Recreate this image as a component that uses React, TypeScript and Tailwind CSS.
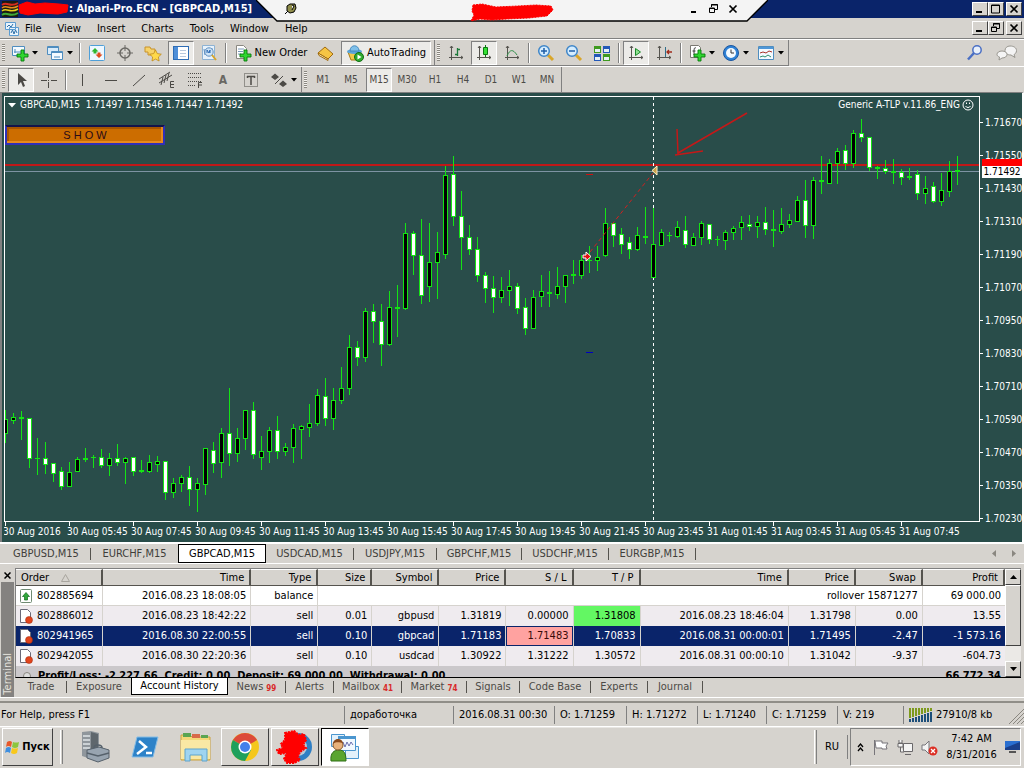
import type { ReactNode } from "react";
import clsx from "clsx";

// --- Data ---------------------------------------------------------------------

type CandleKind = "up" | "down" | "doji";
type Candle = [high: number, top: number, bottom: number, low: number, kind: CandleKind];

const CANDLES: Candle[] = [
  [410, 419, 433, 442, "up"], [413, 417, 420, 423, "up"], [411, 417, 418, 439, "doji"],
  [418, 418, 458, 467, "down"], [438, 458, 458, 474, "doji"], [442, 458, 464, 473, "down"],
  [463, 463, 473, 481, "down"], [467, 471, 486, 489, "down"], [462, 472, 486, 486, "up"],
  [457, 459, 471, 471, "up"], [448, 458, 459, 461, "doji"], [455, 457, 457, 467, "doji"],
  [449, 457, 465, 467, "down"], [453, 458, 465, 475, "up"], [444, 458, 462, 465, "down"],
  [457, 458, 462, 483, "up"], [457, 457, 471, 475, "down"], [460, 470, 471, 472, "doji"],
  [455, 462, 471, 472, "up"], [456, 461, 464, 471, "up"], [461, 461, 492, 499, "down"],
  [478, 483, 492, 497, "up"], [475, 477, 483, 491, "up"], [466, 477, 489, 505, "down"],
  [478, 483, 489, 511, "up"], [448, 448, 484, 494, "up"], [442, 450, 463, 472, "down"],
  [428, 433, 462, 477, "up"], [388, 433, 453, 465, "down"], [428, 438, 453, 461, "up"],
  [410, 410, 438, 449, "up"], [402, 410, 454, 458, "down"], [436, 451, 457, 469, "up"],
  [427, 430, 451, 462, "up"], [416, 430, 451, 458, "down"], [443, 447, 451, 455, "up"],
  [424, 428, 447, 462, "up"], [425, 426, 429, 458, "up"], [404, 423, 427, 436, "up"],
  [389, 395, 423, 425, "up"], [378, 396, 418, 425, "down"], [388, 400, 418, 429, "up"],
  [367, 388, 400, 403, "up"], [335, 347, 388, 394, "up"], [341, 347, 357, 365, "down"],
  [308, 311, 357, 361, "up"], [304, 311, 321, 342, "down"], [304, 321, 344, 365, "down"],
  [291, 307, 344, 345, "up"], [285, 307, 308, 336, "doji"], [223, 233, 308, 309, "up"],
  [231, 233, 255, 274, "down"], [219, 255, 295, 303, "down"], [223, 262, 286, 301, "up"],
  [232, 252, 262, 298, "up"], [166, 175, 254, 258, "up"], [156, 174, 216, 225, "down"],
  [191, 216, 237, 269, "down"], [225, 237, 249, 254, "down"], [237, 249, 275, 281, "down"],
  [272, 275, 288, 302, "down"], [276, 288, 297, 312, "down"], [277, 290, 297, 302, "up"],
  [270, 286, 290, 305, "up"], [283, 286, 308, 313, "down"], [298, 307, 328, 334, "down"],
  [290, 297, 328, 328, "up"], [275, 291, 296, 306, "up"], [271, 292, 293, 306, "doji"],
  [267, 286, 294, 298, "up"], [275, 275, 286, 302, "up"], [260, 274, 275, 283, "doji"],
  [255, 260, 275, 278, "up"], [246, 260, 260, 272, "doji"], [246, 257, 260, 270, "up"],
  [208, 223, 255, 256, "up"], [223, 223, 235, 246, "down"], [228, 234, 244, 253, "down"],
  [237, 242, 249, 258, "down"], [227, 235, 249, 250, "up"], [207, 236, 237, 243, "doji"],
  [208, 244, 277, 277, "up"], [229, 232, 245, 245, "up"], [232, 235, 235, 241, "doji"],
  [221, 227, 236, 237, "up"], [216, 230, 244, 247, "down"], [233, 237, 245, 245, "up"],
  [221, 223, 237, 244, "up"], [224, 224, 239, 243, "down"], [236, 239, 239, 245, "doji"],
  [230, 232, 240, 249, "up"], [226, 228, 232, 239, "up"], [216, 222, 227, 239, "up"],
  [215, 224, 226, 230, "down"], [216, 222, 226, 237, "up"], [207, 222, 229, 234, "down"],
  [210, 229, 230, 246, "doji"], [208, 224, 231, 233, "up"], [214, 220, 224, 227, "up"],
  [196, 200, 221, 221, "up"], [180, 200, 225, 237, "down"], [177, 180, 225, 238, "up"],
  [156, 180, 181, 193, "doji"], [159, 163, 183, 183, "up"], [148, 151, 163, 183, "up"],
  [145, 150, 163, 169, "down"], [130, 133, 163, 167, "up"], [119, 133, 137, 141, "down"],
  [137, 137, 167, 170, "down"], [166, 167, 168, 178, "doji"], [160, 168, 171, 173, "down"],
  [159, 171, 172, 183, "doji"], [169, 172, 177, 184, "down"], [168, 176, 177, 179, "doji"],
  [170, 174, 193, 199, "down"], [176, 188, 193, 203, "up"], [182, 186, 201, 202, "down"],
  [173, 190, 201, 205, "up"], [161, 171, 191, 196, "up"], [156, 170, 171, 184, "doji"],
];

const PRICES = [
  "1.71670", "1.71550", "1.71430", "1.71310", "1.71190", "1.71070", "1.70950",
  "1.70830", "1.70710", "1.70590", "1.70470", "1.70350", "1.70230",
];

const TIMES = [
  "30 Aug 2016", "30 Aug 05:45", "30 Aug 07:45", "30 Aug 09:45", "30 Aug 11:45",
  "30 Aug 13:45", "30 Aug 15:45", "30 Aug 17:45", "30 Aug 19:45", "30 Aug 21:45",
  "30 Aug 23:45", "31 Aug 01:45", "31 Aug 03:45", "31 Aug 05:45", "31 Aug 07:45",
];

const CHART_TABS = [
  { label: "GBPUSD,M15", width: "w-[89px]" },
  { label: "EURCHF,M15", width: "w-[87px]" },
  { label: "GBPCAD,M15", width: "w-[88px]", active: true },
  { label: "USDCAD,M15", width: "w-[88px]" },
  { label: "USDJPY,M15", width: "w-[83px]" },
  { label: "GBPCHF,M15", width: "w-[85px]" },
  { label: "USDCHF,M15", width: "w-[87px]" },
  { label: "EURGBP,M15", width: "w-[87px]" },
];

const TERMINAL_TABS = [
  { label: "Trade", width: "w-[51px]" },
  { label: "Exposure", width: "w-[64px]" },
  { label: "Account History", width: "w-[97px]", active: true },
  { label: "News", width: "w-[58px]", badge: "99" },
  { label: "Alerts", width: "w-[48px]" },
  { label: "Mailbox", width: "w-[68px]", badge: "41" },
  { label: "Market", width: "w-[65px]", badge: "74" },
  { label: "Signals", width: "w-[53px]" },
  { label: "Code Base", width: "w-[71px]" },
  { label: "Experts", width: "w-[57px]" },
  { label: "Journal", width: "w-[55px]" },
];

const COLUMNS = [
  { label: "Order", width: "w-[87px]" },
  { label: "Time", width: "w-[148px]" },
  { label: "Type", width: "w-[67px]" },
  { label: "Size", width: "w-[54px]" },
  { label: "Symbol", width: "w-[67px]" },
  { label: "Price", width: "w-[67px]" },
  { label: "S / L", width: "w-[67px]" },
  { label: "T / P", width: "w-[67px]" },
  { label: "Time", width: "w-[148px]" },
  { label: "Price", width: "w-[67px]" },
  { label: "Swap", width: "w-[67px]" },
  { label: "Profit", width: "w-[82px]" },
];

const ORDERS = [
  ["802886012", "2016.08.23 18:42:22", "sell", "0.01", "gbpusd", "1.31819", "0.00000", "1.31808", "2016.08.23 18:46:04", "1.31798", "0.00", "13.55"],
  ["802941965", "2016.08.30 22:00:55", "sell", "0.10", "gbpcad", "1.71183", "1.71483", "1.70833", "2016.08.31 00:00:01", "1.71495", "-2.47", "-1 573.16"],
  ["802942055", "2016.08.30 22:20:36", "sell", "0.10", "usdcad", "1.30922", "1.31222", "1.30572", "2016.08.31 00:00:10", "1.31042", "-9.37", "-604.73"],
];

const SELECTED_ORDER = "802941965";

// --- Shared bits --------------------------------------------------------------

const RAISED = "border border-t-white border-l-white border-r-[#404040] border-b-[#404040]";
const SUNKEN = "border border-t-[#808080] border-l-[#808080] border-r-white border-b-white";

interface IconProps {
  children: ReactNode;
  size?: number;
}

function Icon({ children, size = 18 }: IconProps) {
  return (
    <svg width={size} height={size} viewBox="0 0 18 18" fill="none" className="shrink-0">
      {children}
    </svg>
  );
}

function Caret() {
  return (
    <svg width="6" height="4" viewBox="0 0 6 4" className="shrink-0">
      <path d="M0 0h6L3 3.5z" fill="#000" />
    </svg>
  );
}

function Grip() {
  return (
    <div className="mx-[2px] my-1 w-[3px] shrink-0 self-stretch bg-[repeating-linear-gradient(#8a8780_0_1px,#f4f2ef_1px_2px)]" />
  );
}

function Divider() {
  return <div className="mx-[2px] h-5 w-[2px] shrink-0 border-l border-[#808080] bg-white" />;
}

interface ToolProps {
  label: string;
  children: ReactNode;
  pressed?: boolean;
  width?: string;
}

function Tool({ label, children, pressed = false, width = "w-7" }: ToolProps) {
  return (
    <button type="button" aria-label={label} className={clsx("flex h-6 shrink-0 items-center justify-center px-px", width)}>
      <span
        className={clsx(
          "flex h-full w-full items-center justify-center gap-[3px]",
          pressed && SUNKEN,
          pressed && "bg-[#ecebe8]"
        )}
      >
        {children}
      </span>
    </button>
  );
}

function GreenPlus() {
  return (
    <path d="M10 6h3v4h4v3h-4v4h-3v-4H6v-3h4z" fill="#2fd62f" stroke="#087a0b" strokeWidth="0.9" />
  );
}

function Axes() {
  return <path d="M4.500 2v14M2 13.500h14M3 4l1.500-2L6 4M14 12l2 1.500-2 1.500" stroke="#55534e" />;
}

// --- Title bar and menu -------------------------------------------------------

function WindowButtons({ restore = false }: { restore?: boolean }) {
  const button = clsx(RAISED, "flex h-[14px] w-4 items-center justify-center bg-[#d6d3ce]");
  return (
    <div className="mr-[2px] flex">
      <button type="button" aria-label="Minimize" className={button}>
        <svg width="12" height="10" viewBox="0 0 12 10"><path d="M2 7h6v2H2z" /></svg>
      </button>
      <button type="button" aria-label="Restore" className={button}>
        <svg width="12" height="10" viewBox="0 0 12 10" fill="none" stroke="#000">
          {restore ? <RestoreGlyph /> : <path d="M1.500 1v8h8V1zM1 1.500h9" />}
        </svg>
      </button>
      <button type="button" aria-label="Close" className={clsx(button, "ml-[2px]")}>
        <CloseGlyph />
      </button>
    </div>
  );
}

function RestoreGlyph() {
  return <path d="M3.500 3V.5h6v5H7M3 1h7M1.500 4v4.500h5V4zM1 4.500h6" />;
}

function CloseGlyph() {
  return (
    <svg width="12" height="10" viewBox="0 0 12 10" stroke="#000" strokeWidth="1.700">
      <path d="M2.500 1.500l7 7M9.500 1.500l-7 7" />
    </svg>
  );
}

function RemoteBar() {
  return (
    <div className="absolute top-0 left-1/2 z-10 h-[22px] w-[512px] -translate-x-1/2">
      <svg className="absolute inset-0" width="512" height="22" viewBox="0 0 512 22">
        <path d="M0 0l21 21h470l21-21z" fill="#f4f4f4" />
        <path d="M0 0l21 21h470l21-21" fill="none" stroke="#000" strokeWidth="1.300" />
        <path
          d="M217 5l9-1 14 3 22-1 18-1 15 1 2 4-6 6-18 2-22 1-15 1-12-1-9 2 3-6-2-4z"
          fill="#f00"
          stroke="#f00"
          strokeDasharray="2 1"
        />
        <path d="M31 6l3-2h5l1 4-2 4-4 1-3-2z" fill="#8f8d4a" stroke="#000" />
        <path d="M36 5l2 1-2 4M32 11l-3 3" stroke="#000" fill="#fff" />
      </svg>
      <div className="relative flex h-full items-start justify-end gap-[7px] pt-1 pr-[29px]">
        <button type="button" aria-label="Minimize session">
          <svg width="12" height="10" viewBox="0 0 12 10"><path d="M2 7h5v2H2z" /></svg>
        </button>
        <button type="button" aria-label="Restore session">
          <svg width="12" height="10" viewBox="0 0 12 10" fill="none" stroke="#000"><RestoreGlyph /></svg>
        </button>
        <button type="button" aria-label="Close session"><CloseGlyph /></button>
      </div>
    </div>
  );
}

function TitleBar() {
  return (
    <header className="relative flex h-[18px] items-center justify-between bg-[#0a246a]">
      <div className="flex items-center">
        <svg width="69" height="18" viewBox="0 0 69 18" fill="none">
          <path d="M2 1h16v16H2z" fill="#1b1b12" />
          <path d="M2 5c5-4 8 3 16-2" stroke="#d52b1e" strokeWidth="2" />
          <path d="M2 8c5-4 8 3 16-2" stroke="#e88b1c" strokeWidth="1.500" />
          <path d="M2 11c5-4 8 3 16-2" stroke="#e8d21c" strokeWidth="1.500" />
          <path d="M2 15c5-4 8 3 16-2" stroke="#3faa36" strokeWidth="2" />
          <path d="M19 5l8-3 8 2 10-1 14 1 9 1-1 7-9 2-18-1-12 2-8-2z" fill="#f00" stroke="#f00" />
        </svg>
        <h1 className="text-[11px] leading-4 font-bold whitespace-pre text-white">: Alpari-Pro.ECN - [GBPCAD,M15]</h1>
      </div>
      <WindowButtons />
      <RemoteBar />
    </header>
  );
}

function MenuBar() {
  const items = ["File", "View", "Insert", "Charts", "Tools", "Window", "Help"];
  return (
    <nav className="flex h-[21px] items-center justify-between border-b border-[#808080]">
      <div className="flex items-center gap-[5px] pt-px">
        <svg width="17" height="18" viewBox="0 0 17 18" fill="none" className="ml-[3px]">
          <path d="M2.500 2.500h10v7h-10zM6.500 7.500h9v8h-9z" fill="#e9f4fc" stroke="#5b9bd0" />
          <path d="M4 7l2-2 2 2 2-3M8 13l1.500-3 1.500 4 1.500-4 1.500 3" stroke="#2d6fa8" />
        </svg>
        <div className="flex gap-4">
          {items.map((label) => (
            <button key={label} type="button">{label}</button>
          ))}
        </div>
      </div>
      <WindowButtons restore />
    </nav>
  );
}

// --- Toolbars -----------------------------------------------------------------

function MainToolbar() {
  return (
    <div className="flex h-[27px] items-center justify-between border-t border-white">
      <div className="flex h-full items-center border-r border-b border-[#808080]">
        <Grip />
        <Tool label="New chart" width="w-[35px]">
          <Icon>
            <path d="M1.500 2.500h12v9h-12z" fill="#f4faff" stroke="#4f8dbf" />
            <path d="M4 5v4M3 8h7" stroke="#4f8dbf" />
            <GreenPlus />
          </Icon>
          <Caret />
        </Tool>
        <Tool label="Profiles" width="w-[35px]">
          <Icon>
            <path d="M1.500 2.500h11v8h-11z" fill="#d8ebfa" stroke="#4f8dbf" />
            <path d="M5.500 7.500h11v8h-11z" fill="#f4faff" stroke="#4f8dbf" />
            <path d="M5 8.500h12M2 3.500h10M8 13h6" stroke="#4f8dbf" />
          </Icon>
          <Caret />
        </Tool>
        <Divider />
        <Tool label="Market Watch">
          <Icon>
            <rect x="1.500" y="1.500" width="15" height="15" rx="1" fill="#eef7ff" stroke="#4f9fd8" />
            <path d="M7 4l3.500 3.500H8.500v2h-3v-2H3.500z" fill="#2fb52f" />
            <path d="M11 14l-3.500-3.500h2v-2h3v2h2z" fill="#e04a1c" />
          </Icon>
        </Tool>
        <Tool label="Crosshair view">
          <Icon>
            <circle cx="9" cy="9" r="5" stroke="#6b6964" strokeWidth="1.500" />
            <path d="M9 1v6M9 11v6M1 9h6M11 9h6" stroke="#6b6964" />
          </Icon>
        </Tool>
        <Tool label="Favorites">
          <Icon>
            <path d="M1 3h5l1 2h4v6H4V8H1z" fill="#f7d36a" stroke="#c8922a" />
            <path d="M11.500 6l1.800 3.600 4 .6-2.900 2.800.7 4-3.600-1.900L8 17l.6-4-2.900-2.800 4-.6z" fill="#ffd94a" stroke="#bf8a1c" strokeWidth="0.8" />
          </Icon>
        </Tool>
        <Tool label="Navigator" pressed>
          <Icon>
            <rect x="1.500" y="2.500" width="15" height="13" fill="#fff" stroke="#2f6db5" />
            <path d="M2 3h4v12H2z" fill="#4f8fd8" />
            <path d="M8 6.500h6M8 9.500h6M8 12.500h6" stroke="#b8c9de" />
          </Icon>
        </Tool>
        <Tool label="Data window">
          <Icon>
            <path d="M2.500 1.500h12v14h-12z" fill="#e8f2fb" stroke="#8eb3d4" />
            <path d="M4 5l1 6M12 4v7" stroke="#5f8fc0" />
            <circle cx="9" cy="8" r="4.200" fill="#cfe4f6" stroke="#5f8fc0" />
            <path d="M7 9V6l2 3 1-3v3" stroke="#2f6db5" />
            <path d="M12 11l4 5" stroke="#d9a62a" strokeWidth="2" />
          </Icon>
        </Tool>
        <Divider />
        <Tool label="New Order" width="w-[83px]">
          <Icon>
            <path d="M2.500 1.500h7l3 3v10h-10z" fill="#fff" stroke="#8a8882" />
            <path d="M4 5h6M4 7.500h5M4 10h3" stroke="#7a9ab8" />
            <GreenPlus />
          </Icon>
          <span>New Order</span>
        </Tool>
        <Tool label="MetaEditor">
          <Icon>
            <path d="M1 9l7-6 8 7-5 5z" fill="#f6c544" stroke="#a06a10" />
            <path d="M1 9l10 6v1.500L2 11.500z" fill="#fff1b0" stroke="#a06a10" />
          </Icon>
        </Tool>
        <Tool label="AutoTrading" width="w-[92px]" pressed>
          <Icon>
            <path d="M2 8h13l-3 8H5z" fill="#f2c94a" stroke="#a87b16" />
            <ellipse cx="8.500" cy="7.500" rx="7.500" ry="2.500" fill="#5aa5dc" />
            <path d="M4 7c0-7 9-7 9 0z" fill="#7fc0ea" stroke="#3a7fb5" strokeWidth="0.800" />
            <circle cx="13" cy="13" r="4.500" fill="#2faa2f" stroke="#0f6e12" />
            <path d="M11.500 10.500l4 2.500-4 2.500z" fill="#fff" />
          </Icon>
          <span>AutoTrading</span>
        </Tool>
        <div className="ml-[2px] h-full border-l border-[#808080]" />
        <Grip />
        <Tool label="Bar chart">
          <Icon><Axes /><path d="M10.500 4v8M8 10.500h2M11 5.500h2" stroke="#1d7a3a" strokeWidth="1.300" /></Icon>
        </Tool>
        <Tool label="Candlesticks" pressed>
          <Icon>
            <Axes />
            <path d="M10.500 1v12" stroke="#0b7a10" />
            <path d="M8.500 3.500h4v7h-4z" fill="#35e035" stroke="#0b7a10" />
          </Icon>
        </Tool>
        <Tool label="Line chart">
          <Icon><Axes /><path d="M4 12c3-7 6-7 10-1" stroke="#2f8f4a" /></Icon>
        </Tool>
        <Divider />
        <Tool label="Zoom in">
          <Icon>
            <path d="M11 11l5 5" stroke="#d9a62a" strokeWidth="3" />
            <circle cx="7" cy="7" r="5.300" fill="#d5edff" stroke="#3f86c9" strokeWidth="1.500" />
            <path d="M7 4v6M4 7h6" stroke="#1f5fa8" strokeWidth="1.500" />
          </Icon>
        </Tool>
        <Tool label="Zoom out">
          <Icon>
            <path d="M11 11l5 5" stroke="#d9a62a" strokeWidth="3" />
            <circle cx="7" cy="7" r="5.300" fill="#d5edff" stroke="#3f86c9" strokeWidth="1.500" />
            <path d="M4 7h6" stroke="#1f5fa8" strokeWidth="1.500" />
          </Icon>
        </Tool>
        <Tool label="Tile windows">
          <Icon>
            <path d="M1 2h7v7H1zM10 10h7v7h-7z" fill="#3f9a1f" />
            <path d="M10 2h7v7h-7zM1 10h7v7H1z" fill="#2358b8" />
            <path d="M2 5h5v3H2zM11 5h5v3h-5zM2 13h5v3H2zM11 13h5v3h-5z" fill="#e6f0f6" />
          </Icon>
        </Tool>
        <Divider />
        <Tool label="Auto scroll" pressed>
          <Icon><Axes /><path d="M8.500 4.500l5 3.500-5 3.500z" fill="#8fe08f" stroke="#1a8a2a" /></Icon>
        </Tool>
        <Tool label="Chart shift">
          <Icon>
            <Axes />
            <path d="M10.500 3v10" stroke="#2f6d8a" />
            <path d="M17 8h-5m2-2l-2 2 2 2" stroke="#a02a1a" strokeWidth="1.300" />
          </Icon>
        </Tool>
        <Divider />
        <Tool label="Indicators" width="w-[34px]">
          <Icon>
            <path d="M2.500 1.500h8l2 2v10h-10z" fill="#fff" stroke="#7a7872" />
            <path d="M8 4c-2-1-2 1-2 7M4.500 7h3" stroke="#3a3a3a" />
            <GreenPlus />
          </Icon>
          <Caret />
        </Tool>
        <Tool label="Periods" width="w-[35px]">
          <Icon>
            <circle cx="9" cy="9" r="7.500" fill="#2f82d6" stroke="#1a56a0" />
            <circle cx="9" cy="9" r="5" fill="#f4faff" />
            <path d="M9 5.500V9h3" stroke="#333" />
          </Icon>
          <Caret />
        </Tool>
        <Tool label="Templates" width="w-[35px]">
          <Icon>
            <path d="M1.500 2.500h15v13h-15z" fill="#f4faff" stroke="#4f8dbf" />
            <path d="M2 3h14v2H2z" fill="#4f97d8" />
            <path d="M3 9l3-1 3 1 3-2 3 1" stroke="#a83226" />
            <path d="M3 13l3-1 2 1 3-2 3 2" stroke="#2f8f6a" />
          </Icon>
          <Caret />
        </Tool>
      </div>
      <div className="flex items-center gap-3 pr-[6px]">
        <button type="button" aria-label="Search">
          <Icon>
            <circle cx="11" cy="6" r="4.200" fill="#e8f0fb" stroke="#4a6fc4" strokeWidth="1.500" />
            <path d="M8 9l-6 6.500" stroke="#4a6fc4" strokeWidth="2.500" />
          </Icon>
        </button>
        <button type="button" aria-label="Chat">
          <svg width="22" height="18" viewBox="0 0 22 18" fill="#f4f4f4" stroke="#98968f">
            <path d="M14 2c4 0 6.500 2 6.500 4.500S19 10 18 10.500l1 3-4-2.500c-4 0-6-2-6-4.500S11 2 14 2z" />
            <path d="M6 7c3 0 5 1.500 5 3.500S9 14 6 14l-3 2 .5-3C2 12.500 1 11.500 1 10.500 1 8.500 3 7 6 7z" />
          </svg>
        </button>
      </div>
    </div>
  );
}

function DrawingToolbar() {
  const periods = ["M1", "M5", "M15", "M30", "H1", "H4", "D1", "W1", "MN"];
  return (
    <div className="flex h-[26px] items-center border-t border-white text-[#4c4a46]">
      <Grip />
      <Tool label="Cursor" pressed>
        <Icon><path d="M6 2v12l3-3 2 5 2-1-2-5h4z" fill="#4c4a46" /></Icon>
      </Tool>
      <Tool label="Crosshair">
        <Icon><path d="M8.500 1v6M8.500 11v6M1 9.500h6M11 9.500h6M8 9.500h1" stroke="#4c4a46" /></Icon>
      </Tool>
      <Divider />
      <Tool label="Vertical line"><Icon><path d="M8.500 3v12" stroke="#4c4a46" /></Icon></Tool>
      <Tool label="Horizontal line"><Icon><path d="M3 9.500h12" stroke="#4c4a46" /></Icon></Tool>
      <Tool label="Trendline"><Icon><path d="M3 15L15 4" stroke="#4c4a46" /></Icon></Tool>
      <Tool label="Equidistant channel">
        <Icon>
          <path d="M1 12l13-8M1 8l11-7M3 14L5 6M6 12l2-8M9 10l2-8" stroke="#4c4a46" />
          <path d="M16 10.500h-3.500v6H16M13 13.500h3" stroke="#4c4a46" />
        </Icon>
      </Tool>
      <Tool label="Fibonacci retracement">
        <Icon>
          <path d="M2 2.500h14M2 6.500h14M2 10.500h14M2 14.500h8" stroke="#4c4a46" strokeDasharray="1 1" />
          <path d="M16 11.500h-3.500V17M13 14h3" stroke="#4c4a46" />
        </Icon>
      </Tool>
      <Tool label="Text"><span className="text-[12px] font-bold text-[#6a6863]">A</span></Tool>
      <Tool label="Text label">
        <Icon>
          <path d="M2.500 2.500h13v13h-13z" stroke="#4c4a46" strokeDasharray="1 1" />
          <path d="M5 5.500h8M9 5v9M5.500 5v2M12.500 5v2" stroke="#4c4a46" strokeWidth="1.500" />
        </Icon>
      </Tool>
      <Tool label="Arrows" width="w-[36px]">
        <Icon>
          <path d="M1 6l4-3.500L9 6 5 9zM9 13l4-3.500 4 3.500-4 3z" fill="#4c4a46" />
          <path d="M5 13l8-8" stroke="#4c4a46" />
        </Icon>
        <Caret />
      </Tool>
      <div className="h-full border-l border-[#808080]" />
      <Grip />
      {periods.map((period) => (
        <Tool key={period} label={period} pressed={period === "M15"}>
          <span className="text-[10px]">{period}</span>
        </Tool>
      ))}
      <div className="h-full border-l border-[#808080]" />
    </div>
  );
}

// --- Chart --------------------------------------------------------------------

function PlotArea() {
  return (
    <svg className="block h-[424px] w-full" viewBox="5 97 974 424" preserveAspectRatio="none">
      <rect x="5" y="171" width="974" height="1" fill="#7d93a3" />
      <rect x="5" y="164" width="974" height="2" fill="#c01818" />
      <path d="M653.500 97v424" stroke="#fff" strokeDasharray="3 3" />
      <g shapeRendering="crispEdges">
        {CANDLES.map(([high, top, bottom, low, kind], i) => {
          const x = 5 + i * 8;
          return (
            <g key={i}>
              <rect x={x} y={high} width="1" height={low - high + 1} fill="#14e414" />
              <rect x={x - 2} y={top} width="5" height={bottom - top + 1} fill="#14e414" />
              {kind !== "doji" && (
                <rect x={x - 1} y={top + 1} width="3" height={bottom - top - 1} fill={kind === "up" ? "#000" : "#fff"} />
              )}
            </g>
          );
        })}
      </g>
      {/* trade entry, exit and the line between them */}
      <path d="M590 252L653 173" stroke="#d02020" strokeDasharray="4 3" />
      <path d="M583 255h3v-3l5 4.500-5 4.500v-3h-3z" fill="#e01010" stroke="#fff" />
      <path d="M657 166v9l-5-4.500z" fill="#c9a24a" stroke="#fff0c8" />
      <path d="M586 174.500h7" stroke="#d01010" />
      <path d="M586 352.500h7" stroke="#0000c0" />
      <path d="M747 113L678 153M677 129l1 25M675 155l28-4" stroke="#c41818" strokeWidth="1.500" fill="none" />
    </svg>
  );
}

function Chart() {
  return (
    <main className="relative flex h-[450px] border-t border-r-2 border-l-2 border-t-[#808080] border-r-white border-l-[#808080] bg-[#294d4a] pt-[3px] pl-[2px] text-[10px] leading-3 text-white">
      <div className="min-w-0 flex-1">
        <div className="relative border border-white">
          <PlotArea />
          <div className="absolute top-[2px] right-[5px] left-[3px] flex items-center justify-between">
            <div className="flex items-center gap-1 whitespace-pre">
              <svg width="8" height="5" viewBox="0 0 8 5"><path d="M0 0h8L4 4.500z" fill="#fff" /></svg>
              <span>GBPCAD,M15  1.71497 1.71546 1.71447 1.71492</span>
            </div>
            <div className="flex items-center gap-[2px]">
              <span>Generic A-TLP v.11.86_ENG</span>
              <svg width="12" height="12" viewBox="0 0 12 12" fill="none" stroke="#fff">
                <circle cx="6" cy="6" r="5" />
                <path d="M3.500 7c1 2 4 2 5 0M4.500 3.500v1.500M7.500 3.500v1.500" />
              </svg>
            </div>
          </div>
          <button
            type="button"
            className="absolute top-[28px] left-0 flex h-5 w-40 items-center justify-center border-2 border-[#3030b8] border-t-[#14144a] bg-[#cc6d00] font-['Liberation_Sans',sans-serif] text-[11px] text-[#2a0a18] shadow-[inset_-2px_-2px_0_#e88a1c,inset_2px_2px_0_#a85600]"
          >
            S H O W
          </button>
        </div>
        <div className="flex h-[19px] overflow-hidden">
          {TIMES.map((time) => (
            <div key={time} className="w-16 shrink-0 pl-px">
              <div className="h-1 border-l border-white" />
              <div className="-ml-[2px] whitespace-nowrap">{time}</div>
            </div>
          ))}
        </div>
      </div>
      <div className="w-[42px] shrink-0 overflow-hidden pt-[10px]">
        {PRICES.map((price) => (
          <div key={price} className="flex h-[33px] items-center gap-[2px]">
            <span className="h-px w-[3px] shrink-0 bg-white" />
            {price}
          </div>
        ))}
      </div>
      <div className="absolute top-[66px] right-0 w-10">
        <div className="h-[7px] bg-[#f00]" />
        <div className="h-3 bg-white text-center text-black">1.71492</div>
      </div>
    </main>
  );
}

function ChartTabs() {
  return (
    <div className="flex h-[22px] items-start justify-between border-t-2 border-b border-t-white border-b-white pl-[2px]">
      <div className="flex h-[19px]">
        {CHART_TABS.map(({ label, width, active }, i) => (
          <button
            key={label}
            type="button"
            className={clsx(
              "flex items-center justify-center",
              width,
              active ? "border border-black bg-white text-black" : "text-[#403e3a]"
            )}
          >
            <span className="flex-1">{label}</span>
            {!active && i !== 1 && <span className="h-3 border-l border-[#55534e]" />}
          </button>
        ))}
      </div>
      <div className="flex h-full items-center gap-[14px] pr-2">
        <svg width="5" height="7" viewBox="0 0 5 7"><path d="M4 0v7L0 3.500z" fill="#8a8780" /></svg>
        <svg width="5" height="7" viewBox="0 0 5 7"><path d="M1 0v7l4-3.500z" fill="#8a8780" /></svg>
      </div>
    </div>
  );
}

// --- Terminal -----------------------------------------------------------------

function OrderIcon({ deposit = false }: { deposit?: boolean }) {
  return (
    <svg width="14" height="16" viewBox="0 0 14 16" fill="none" className="shrink-0">
      {deposit ? (
        <>
          <rect x="1.500" y="1.500" width="11" height="13" rx="1" fill="#fff" stroke="#6f8a72" />
          <path d="M7 4.500l3.500 4H8.500V12h-3V8.500h-2z" fill="#2fa83a" stroke="#0f6a1a" strokeWidth="0.700" />
        </>
      ) : (
        <>
          <path d="M1.500 1.500h7l3 3v10h-10z" fill="#fff" stroke="#6a6a78" />
          <circle cx="10" cy="12" r="3.500" fill="#e2441c" stroke="#9a2408" strokeWidth="0.500" />
        </>
      )}
    </svg>
  );
}

function HistoryTable() {
  const cell = "overflow-hidden px-1 text-right whitespace-nowrap";
  return (
    <table className="w-full table-fixed border-separate border-spacing-0">
      <thead>
        <tr className="h-[17px]">
          {COLUMNS.map(({ label, width }, i) => (
            <th
              key={i}
              className={clsx(
                "border-t border-r-2 border-b border-t-white border-r-[#55534e] border-b-[#55534e] bg-[#d6d3ce] p-0 font-normal",
                width,
                i === 0 ? "pl-[5px] text-left" : "pr-[5px] text-right"
              )}
            >
              <span className="leading-[15px]">{label}</span>
              {i === 0 && (
                <svg width="9" height="8" viewBox="0 0 9 8" className="ml-3 inline" fill="none" stroke="#a8a59e">
                  <path d="M.5 7.500L4.500.5l4 7z" />
                </svg>
              )}
            </th>
          ))}
        </tr>
      </thead>
      <tbody>
        <tr className="h-5 bg-white">
          <td className="border-r border-b border-[#d6d3ce] py-0 pr-1 pl-[3px]">
            <span className="flex items-center gap-[4px]"><OrderIcon deposit />802885694</span>
          </td>
          <td className={clsx(cell, "border-r border-b border-[#d6d3ce] py-0")}>2016.08.23 18:08:05</td>
          <td className={clsx(cell, "border-r border-b border-[#d6d3ce] py-0")}>balance</td>
          <td colSpan={8} className={clsx(cell, "border-r border-b border-[#d6d3ce] py-0")}>rollover 15871277</td>
          <td className={clsx(cell, "border-b border-[#d6d3ce] py-0")}>69 000.00</td>
        </tr>
        {ORDERS.map((order) => {
          const selected = order[0] === SELECTED_ORDER;
          return (
            <tr key={order[0]} className={clsx("h-5", selected ? "bg-[#0a246a] text-white" : "bg-[#efebef]")}>
              {order.map((value, i) => (
                <td
                  key={i}
                  className={clsx(
                    "border-r border-[#d6d3ce] py-0 last:border-r-0",
                    i === 0 ? "pr-1 pl-[3px]" : cell,
                    order[0] === "802886012" && i === 7 && "bg-[#63f763]",
                    selected && i === 6 && "bg-[#ffa2a0] text-[#3a0a0a] shadow-[inset_0_0_0_1px_#0a246a]"
                  )}
                >
                  {i === 0 ? <span className="flex items-center gap-[4px]"><OrderIcon />{value}</span> : value}
                </td>
              ))}
            </tr>
          );
        })}
        <tr className="h-5 bg-[#cbc8cb] font-bold">
          <td colSpan={11} className="py-0 pl-[7px]">
            <span className="flex items-center gap-[7px] whitespace-nowrap">
              <svg width="8" height="8" viewBox="0 0 8 8" fill="#ddd" stroke="#8a8780"><circle cx="4" cy="4" r="3.500" /></svg>
              <span>Profit/Loss: -2 227.66&nbsp; Credit: 0.00&nbsp; Deposit: 69 000.00&nbsp; Withdrawal: 0.00</span>
            </span>
          </td>
          <td className={clsx(cell, "py-0")}>66 772.34</td>
        </tr>
      </tbody>
    </table>
  );
}

function Scrollbar() {
  const button = clsx(RAISED, "flex h-4 items-center justify-center bg-[#d6d3ce]");
  return (
    <div className="flex w-4 shrink-0 flex-col bg-[#ebe9e6]">
      <button type="button" aria-label="Scroll up" className={button}>
        <svg width="7" height="4" viewBox="0 0 7 4"><path d="M0 4h7L3.500 0z" /></svg>
      </button>
      <div className={clsx(RAISED, "h-[61px] bg-[#d6d3ce]")} />
      <div className="flex-1" />
      <button type="button" aria-label="Scroll down" className={button}>
        <svg width="7" height="4" viewBox="0 0 7 4"><path d="M0 0h7L3.500 4z" /></svg>
      </button>
    </div>
  );
}

function Terminal() {
  return (
    <section className="flex h-[134px] border-b border-white pt-1">
      <div className="flex w-[15px] shrink-0 flex-col">
        <button type="button" aria-label="Close terminal" className="flex h-[14px] shrink-0 items-center justify-center">
          <svg width="7" height="7" viewBox="0 0 7 7" stroke="#000" strokeWidth="1.500"><path d="M.5.5l6 6M6.500.5l-6 6" /></svg>
        </button>
        <div className="mx-px flex min-h-0 flex-1 flex-col items-center justify-end bg-[#848280] pb-[2px]">
          <span className="rotate-180 leading-3 text-[#e4e2de] [writing-mode:vertical-rl]">Terminal</span>
        </div>
      </div>
      <div className="flex min-w-0 flex-1 flex-col">
        <div className="mr-[3px] flex h-[110px] overflow-hidden border-t border-b border-l border-t-[#808080] border-b-black border-l-[#808080]">
          <div className="min-w-0 flex-1 overflow-hidden"><HistoryTable /></div>
          <Scrollbar />
        </div>
        <div className="flex h-[17px] pl-px">
          {TERMINAL_TABS.map(({ label, width, active, badge }, i) => (
            <button
              key={label}
              type="button"
              className={clsx(
                "flex shrink-0 items-center",
                width,
                active ? "border border-t-0 border-black bg-white text-black" : "text-[#4c4a46]"
              )}
            >
              <span className="flex flex-1 items-center justify-center gap-[3px] whitespace-nowrap">
                {label}
                {badge && <span className="pt-[5px] text-[8px] leading-3 font-bold text-[#d82a2a]">{badge}</span>}
              </span>
              {!active && i !== 1 && <span className="h-3 border-l border-[#55534e]" />}
            </button>
          ))}
        </div>
      </div>
    </section>
  );
}

// --- Status bar and taskbar ---------------------------------------------------

function StatusBar() {
  const cells = [
    ["доработочка", "w-[109px]"],
    ["2016.08.31 00:30", "w-[101px]"],
    ["O: 1.71259", "w-[72px]"],
    ["H: 1.71272", "w-[71px]"],
    ["L: 1.71240", "w-[69px]"],
    ["C: 1.71259", "w-[71px]"],
    ["V: 219", "w-[66px]"],
  ];
  return (
    <footer className="flex h-[26px] items-center border-t-2 border-b border-t-[#908e88] border-b-white">
      <div className="flex-1 pl-px">For Help, press F1</div>
      {cells.map(([text, width]) => (
        <div key={text} className={clsx("flex h-[18px] items-center border-l border-[#808080] pl-[5px] whitespace-nowrap", width)}>
          {text}
        </div>
      ))}
      <div className="flex h-[18px] w-[121px] items-center gap-[3px] border-l border-[#808080] pl-[5px]">
        <svg width="24" height="14" viewBox="0 0 24 14">
          {Array.from({ length: 8 }).map((_, i) => (
            <g key={i}>
              <rect x={i * 3} y="0" width="2" height={10 - i} fill="#7d9a1c" />
              <rect x={i * 3} y={11 - i} width="2" height={3 + i} fill="#1d4f7a" />
            </g>
          ))}
        </svg>
        <span className="flex-1">27910/8 kb</span>
        <svg width="15" height="16" viewBox="0 0 15 16" stroke="#8a8780" className="self-end"><path d="M0 16L15 1M4 16L15 5M8 16l7-7M12 16l3-3" /></svg>
      </div>
    </footer>
  );
}

function TaskButton({ label, children, pressed = false }: { label: string; children: ReactNode; pressed?: boolean }) {
  return (
    <button
      type="button"
      aria-label={label}
      className={clsx("flex h-[38px] w-12 items-center justify-center", pressed ? SUNKEN : RAISED, pressed && "border-t-black border-l-black bg-white")}
    >
      {children}
    </button>
  );
}

function Taskbar() {
  return (
    <div className="flex h-[41px] items-start justify-between border-t border-[#e8e6e3]">
      <div className="flex items-center">
        <button type="button" className={clsx(RAISED, "ml-[2px] flex h-[38px] w-[51px] items-center justify-center gap-[2px] text-[11px] font-bold")}>
          <svg width="15" height="15" viewBox="0 0 15 15">
            <path d="M2 2q3-2 5 0L6 7Q3 5 1 7z" fill="#e8582a" />
            <path d="M8 2q3 1 6 0l-1 5q-3 2-6 0z" fill="#8cc63f" />
            <path d="M1 8q3-2 5 0l-1 5q-3-2-5 0z" fill="#3f8fe0" />
            <path d="M7 8q3 1 6 0l-1 5q-3 2-6 0z" fill="#f8c81c" />
          </svg>
          Пуск
        </button>
        <div className="ml-[7px] h-[34px] w-[3px] border-r border-l border-r-[#808080] border-l-white" />
        <div className="mr-[8px] ml-[16px] flex items-center gap-[18px]">
          <button type="button" aria-label="Server Manager">
            <svg width="32" height="32" viewBox="0 0 32 32">
              <path d="M3 1l9-1 8 2v24l-8 2-9-3z" fill="#8f969c" />
              <path d="M12 1l7 2v22l-7 2z" fill="#5f676d" />
              <path d="M4 5h7M4 9h7M4 13h7M4 17h7" stroke="#dfe5e8" strokeWidth="1.500" />
              <path d="M8 19l12-3 10 3v8l-11 4-11-4z" fill="#98a4b0" stroke="#56616b" />
              <path d="M8 22l11 3 11-3M15 17c0-4 8-4 8 0" stroke="#56616b" strokeWidth="1.500" fill="none" />
            </svg>
          </button>
          <button type="button" aria-label="PowerShell">
            <svg width="32" height="32" viewBox="0 0 32 32">
              <path d="M8 6h21l-5 20H3z" fill="#2d82c8" stroke="#85bde6" />
              <path d="M10 10l7 6-9 7M17 22h6" stroke="#fff" strokeWidth="2.500" fill="none" />
            </svg>
          </button>
          <button type="button" aria-label="Explorer">
            <svg width="34" height="32" viewBox="0 0 34 32">
              <path d="M2 4h9l2 2h18v23H2z" fill="#f4d878" stroke="#c9a23e" />
              <path d="M4 2h8v4H4zM22 4h7v3h-7z" fill="#5aa552" />
              <path d="M13 3h8v4h-8z" fill="#d86a4a" />
              <path d="M2 9h29v19H2z" fill="#f9e8a4" />
              <path d="M6 30V18h22v12h-5v-6H11v6z" fill="#9fd4f0" stroke="#5fa4cc" />
            </svg>
          </button>
        </div>
        <div className="flex gap-[2px]">
          <TaskButton label="Chrome">
            <svg width="30" height="30" viewBox="0 0 30 30">
              <circle cx="15" cy="15" r="14" fill="#f4c71d" />
              <path d="M15 15L2.900 8A14 14 0 0127.100 8z" fill="#dc4a3a" />
              <path d="M15 15L2.900 8A14 14 0 0015 29l6-11z" fill="#1fa05c" />
              <circle cx="15" cy="15" r="6.500" fill="#fff" />
              <circle cx="15" cy="15" r="5" fill="#4380ea" />
            </svg>
          </TaskButton>
          <TaskButton label="Browser">
            <svg width="38" height="34" viewBox="0 0 38 34">
              <circle cx="22" cy="17" r="14" fill="#2f7fc4" />
              <circle cx="22" cy="17" r="9" fill="#b8cbd8" />
              <path d="M9 3l9-2 5 4 5-1 2 6-3 5 3 3-6 4-2 5 2 3-6 3-7 0-3-4 3-6-8 1-2-4 6-2-2-4 4-4z" fill="#f00" stroke="#f00" strokeWidth="2" strokeDasharray="2 1" />
            </svg>
          </TaskButton>
          <TaskButton label="MetaTrader" pressed>
            <svg width="32" height="32" viewBox="0 0 32 32" fill="none">
              <path d="M2.500 3.500h13v12h-13z" fill="#e3f1fb" stroke="#4b96cf" />
              <path d="M16.500 15.500h13v12h-13z" fill="#e3f1fb" stroke="#4b96cf" />
              <path d="M9.500 5.500h17v14h-17z" fill="#f2f9ff" stroke="#4b96cf" />
              <path d="M9 5h18v3H9z" fill="#4b96cf" />
              <path d="M12 15l2-4 2 5 2-5 2 4 2-4 2 3" stroke="#6a6fae" />
              <path d="M2 30c-1-8 3-11 8-11s7 3 7 11z" fill="#5aa52f" stroke="#2f6e14" />
              <circle cx="9" cy="14" r="5" fill="#e8b27c" stroke="#8a5a2a" />
              <path d="M4 13c0-6 9-7 10-1-3 0-6-2-10 1z" fill="#8a4a1c" />
            </svg>
          </TaskButton>
        </div>
      </div>

      <div className="flex items-center pr-[3px]">
        <div className="h-[34px] w-[3px] border-r border-l border-r-[#808080] border-l-white" />
        <span className="px-2">RU</span>
        <div className="mr-[2px] h-[24px] border-l border-[#808080]" />
        <div className={clsx(SUNKEN, "flex h-[38px] w-[171px] items-center gap-[6px] pl-[6px]")}>
          <svg width="7" height="9" viewBox="0 0 7 9" fill="none" stroke="#000" strokeWidth="1.300"><path d="M1 4l2.500-3L6 4M1 8l2.500-3L6 8" /></svg>
          <div className="flex items-center gap-[7px] pl-[3px]">
            <svg width="17" height="17" viewBox="0 0 17 17" fill="#fff" stroke="#77757a"><path d="M1.500 1v15M2 2h7v2l6 0-2 3 1 3H9V9H3z" /></svg>
            <svg width="17" height="17" viewBox="0 0 17 17" fill="#f4f4f4" stroke="#6a686a"><path d="M6.500 4.500h9v8h-9zM8 15.500h6M2 1v3h3V1M1 4.500h5V8H1zM3.500 8v5H7" /></svg>
            <svg width="17" height="17" viewBox="0 0 17 17">
              <path d="M1 6h3l4-4v13l-4-4H1z" fill="#f4f4f4" stroke="#77757a" />
              <circle cx="12" cy="12" r="4.500" fill="#dc2f24" />
              <path d="M10 10l4 4M14 10l-4 4" stroke="#fff" strokeWidth="1.300" />
            </svg>
          </div>
          <div className="flex-1 text-center leading-4 whitespace-nowrap">
            <div>7:42 AM</div>
            <div>8/31/2016</div>
          </div>
          <svg width="15" height="14" viewBox="0 0 15 14" className="shrink-0"><path d="M0 1h15v9H0z" fill="#2a6fd0" /><path d="M0 8L15 2v8H0z" fill="#1a3f8a" /><path d="M4 12h7" stroke="#555" strokeWidth="2" /></svg>
        </div>
      </div>
    </div>
  );
}

// --- App ----------------------------------------------------------------------

export default function App() {
  return (
    <div className="min-w-[1000px] overflow-hidden bg-[#d6d3ce] font-['DejaVu_Sans_Condensed','DejaVu_Sans',sans-serif] text-[11px] leading-[14px] text-black">
      <TitleBar />
      <MenuBar />
      <MainToolbar />
      <DrawingToolbar />
      <Chart />
      <ChartTabs />
      <Terminal />
      <div className="h-[3px]" />
      <StatusBar />
      <Taskbar />
    </div>
  );
}
